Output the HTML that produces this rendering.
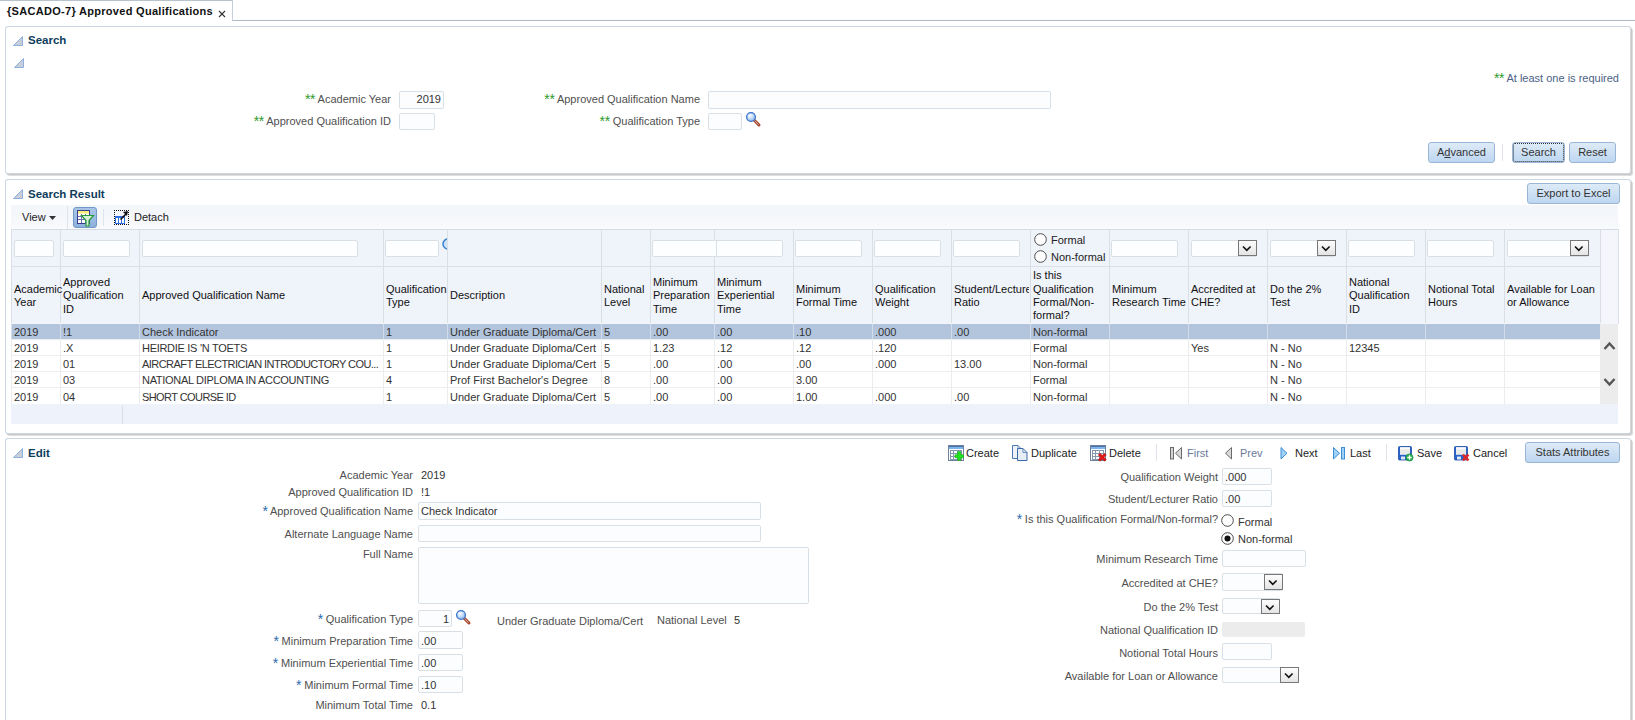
<!DOCTYPE html><html><head><meta charset="utf-8"><style>
html,body{margin:0;padding:0;background:#fff;width:1635px;height:720px;overflow:hidden;position:relative;font-family:"Liberation Sans",sans-serif;}
.t{position:absolute;white-space:nowrap;}
.b{position:absolute;}
.a2{font-size:14px;position:relative;top:1px;letter-spacing:-0.4px;line-height:0;}
</style></head><body>
<div class="b" style="left:0px;top:0px;width:233px;height:21px;box-sizing:border-box;border-top:1px solid #b9c3cd;border-right:1px solid #c5cfd9;background:#fff;"></div>
<div class="b" style="left:233px;top:20px;width:1402px;height:1px;background:#a9bacb;"></div>
<div class="t" style="top:4.69px;font-size:11px;line-height:13px;color:#111;font-weight:bold;letter-spacing:0.3px;left:7px;">{SACADO-7} Approved Qualifications</div>
<svg class="b" style="left:218px;top:10px" width="8" height="8"><line x1="1" y1="1" x2="7" y2="7" stroke="#333" stroke-width="1.1"/><line x1="7" y1="1" x2="1" y2="7" stroke="#333" stroke-width="1.1"/></svg>
<div class="b" style="left:5px;top:26px;width:1626px;height:148px;box-sizing:border-box;border:1px solid #cbd8e4;border-right-color:#d6dbe0;border-bottom-color:#cfd6dd;border-radius:3px;background:#fff;box-shadow:1px 1px 0 #c9c9c9,2px 2px 0 #dedede;"></div>
<svg class="b" style="left:13px;top:36px" width="11" height="11"><defs><linearGradient id="tg1336" x1="0" y1="0" x2="1" y2="1"><stop offset="0" stop-color="#d7dee6"/><stop offset="1" stop-color="#a9b7c6"/></linearGradient></defs><polygon points="0.5,9.5 9.5,0.5 9.5,9.5" fill="#c9cfd8" stroke="#8db0df" stroke-width="1"/></svg>
<div class="t" style="top:33.02px;font-size:11.5px;line-height:14px;color:#0f3d5c;font-weight:bold;left:28px;">Search</div>
<svg class="b" style="left:14px;top:58px" width="11" height="11"><defs><linearGradient id="tg1458" x1="0" y1="0" x2="1" y2="1"><stop offset="0" stop-color="#d7dee6"/><stop offset="1" stop-color="#a9b7c6"/></linearGradient></defs><polygon points="0.5,9.5 9.5,0.5 9.5,9.5" fill="#c9cfd8" stroke="#8db0df" stroke-width="1"/></svg>
<div class="t" style="top:71.69px;font-size:11px;line-height:13px;color:#4c5f86;right:16px;"><span class="a2" style="color:#2d9b2d">**</span> At least one is required</div>
<div class="t" style="top:92.69px;font-size:11px;line-height:13px;color:#4f4f4f;right:1244px;"><span class="a2" style="color:#2d9b2d">**</span> Academic Year</div>
<div class="t" style="top:114.69px;font-size:11px;line-height:13px;color:#4f4f4f;right:1244px;"><span class="a2" style="color:#2d9b2d">**</span> Approved Qualification ID</div>
<div class="t" style="top:92.69px;font-size:11px;line-height:13px;color:#4f4f4f;right:935px;"><span class="a2" style="color:#2d9b2d">**</span> Approved Qualification Name</div>
<div class="t" style="top:114.69px;font-size:11px;line-height:13px;color:#4f4f4f;right:935px;"><span class="a2" style="color:#2d9b2d">**</span> Qualification Type</div>
<div class="b" style="left:399px;top:91px;width:45px;height:18px;box-sizing:border-box;border:1px solid #d8e0e6;border-radius:2px;background:#fbfdfe;"></div>
<div class="t" style="top:92.69px;font-size:11px;line-height:13px;color:#333;right:1194px;">2019</div>
<div class="b" style="left:399px;top:113px;width:36px;height:17px;box-sizing:border-box;border:1px solid #d8e0e6;border-radius:2px;background:#fbfdfe;"></div>
<div class="b" style="left:708px;top:91px;width:343px;height:18px;box-sizing:border-box;border:1px solid #d8e0e6;border-radius:2px;background:#fbfdfe;"></div>
<div class="b" style="left:708px;top:113px;width:34px;height:17px;box-sizing:border-box;border:1px solid #d8e0e6;border-radius:2px;background:#fbfdfe;"></div>
<svg class="b" style="left:745px;top:111px" width="17" height="17" viewBox="0 0 17 17"><defs><radialGradient id="mg745111" cx=".4" cy=".35" r=".7"><stop offset="0" stop-color="#ffffff"/><stop offset=".6" stop-color="#b5d3f5"/><stop offset="1" stop-color="#7fb0ea"/></radialGradient></defs><line x1="9" y1="9" x2="14" y2="14" stroke="#a8442a" stroke-width="3" stroke-linecap="round"/><line x1="9.3" y1="9.3" x2="13.7" y2="13.7" stroke="#c9b6a8" stroke-width="1"/><circle cx="6" cy="6" r="4.4" fill="url(#mg745111)" stroke="#3a74cc" stroke-width="1.3"/></svg>
<div class="b" style="left:1428px;top:142px;width:67px;height:21px;box-sizing:border-box;border:1px solid #9ab6d6;border-radius:3px;background:linear-gradient(#deebf8,#bdd6f0);"></div>
<div class="t" style="top:145.69px;font-size:11px;line-height:13px;color:#333;left:1461.5px;transform:translateX(-50%);">A<u>d</u>vanced</div>
<div class="b" style="left:1502px;top:144px;width:1px;height:17px;background:#dde3e9;"></div>
<div class="b" style="left:1512px;top:142px;width:53px;height:21px;box-sizing:border-box;border:1px solid #9ab6d6;border-radius:3px;background:linear-gradient(#deebf8,#bdd6f0);"></div>
<div class="b" style="left:1513px;top:143px;width:51px;height:19px;box-sizing:border-box;border:1px dotted #333;border-radius:2px;"></div>
<div class="t" style="top:145.69px;font-size:11px;line-height:13px;color:#333;left:1538.5px;transform:translateX(-50%);">Search</div>
<div class="b" style="left:1569px;top:142px;width:47px;height:21px;box-sizing:border-box;border:1px solid #9ab6d6;border-radius:3px;background:linear-gradient(#deebf8,#bdd6f0);"></div>
<div class="t" style="top:145.69px;font-size:11px;line-height:13px;color:#333;left:1592.5px;transform:translateX(-50%);">Reset</div>
<div class="b" style="left:5px;top:179px;width:1626px;height:255px;box-sizing:border-box;border:1px solid #cbd8e4;border-right-color:#d6dbe0;border-bottom-color:#cfd6dd;border-radius:3px;background:#fff;box-shadow:1px 1px 0 #c9c9c9,2px 2px 0 #dedede;"></div>
<svg class="b" style="left:13px;top:189px" width="11" height="11"><defs><linearGradient id="tg13189" x1="0" y1="0" x2="1" y2="1"><stop offset="0" stop-color="#d7dee6"/><stop offset="1" stop-color="#a9b7c6"/></linearGradient></defs><polygon points="0.5,9.5 9.5,0.5 9.5,9.5" fill="#c9cfd8" stroke="#8db0df" stroke-width="1"/></svg>
<div class="t" style="top:187.02px;font-size:11.5px;line-height:14px;color:#0f3d5c;font-weight:bold;left:28px;">Search Result</div>
<div class="b" style="left:1527px;top:183px;width:93px;height:21px;box-sizing:border-box;border:1px solid #9ab6d6;border-radius:3px;background:linear-gradient(#deebf8,#bdd6f0);"></div>
<div class="t" style="top:186.69px;font-size:11px;line-height:13px;color:#333;left:1573.5px;transform:translateX(-50%);">Export to Excel</div>
<div class="b" style="left:11px;top:205px;width:1607px;height:24px;background:linear-gradient(#f3f6fa,#f6f8fb 75%,#fafbfd);"></div>
<div class="t" style="top:210.69px;font-size:11px;line-height:13px;color:#222;left:22px;">View</div>
<svg class="b" style="left:49px;top:216px" width="8" height="5"><polygon points="0,0 7,0 3.5,4" fill="#333"/></svg>
<div class="b" style="left:67px;top:206px;width:1px;height:23px;background:#dfe4ea;"></div>
<div class="b" style="left:73px;top:207px;width:24px;height:21px;box-sizing:border-box;border:1px solid #7197c6;border-radius:3px;background:linear-gradient(#a9c6e8,#8db1dc);"><svg width="24" height="21" style="position:absolute;left:-1px;top:-1px"><rect x="4.5" y="3.5" width="12" height="13" fill="#fff" stroke="#3b3b8c"/><rect x="5" y="4" width="11" height="2.5" fill="#f7ee7a"/><path d="M5 9.5h11M5 12.5h11M8.5 7v9M12.5 7v9" stroke="#6c6cb0" stroke-width="1"/><path d="M8.5 8.5h12l-4.5 5v5.5h-3v-5.5z" fill="#d8f2d8" stroke="#2a9a3a" stroke-width="1.2"/></svg></div>
<div class="b" style="left:103px;top:209px;width:1px;height:17px;background:#dfe4ea;"></div>
<div class="b" style="left:114px;top:210px;width:15px;height:15px;box-sizing:border-box;border:1px dotted #111;"><svg width="15" height="15" style="position:absolute;left:-1px;top:-1px"><rect x="1.5" y="6.5" width="9" height="7" fill="#fff" stroke="#2f6fe0"/><rect x="1" y="6" width="10" height="2" fill="#2f6fe0"/><path d="M4.5 8v6M7.5 8v6" stroke="#2f6fe0"/><path d="M6.5 9.5L12 4" stroke="#111" stroke-width="1.6"/><polygon points="9,2 14,1 13,6" fill="#111"/></svg></div>
<div class="t" style="top:210.69px;font-size:11px;line-height:13px;color:#222;left:134px;">Detach</div>
<div class="b" style="left:11px;top:229px;width:1589px;height:95px;background:#eff3fa;"></div>
<div class="b" style="left:1600px;top:229px;width:18px;height:95px;background:#f4f6fb;"></div>
<div class="b" style="left:11px;top:229px;width:1608px;height:1px;background:#d5dce4;"></div>
<div class="b" style="left:1618px;top:229px;width:1px;height:95px;background:#d9dfe6;"></div>
<div class="b" style="left:11px;top:266px;width:1589px;height:1px;background:#d9e0e7;"></div>
<div class="b" style="left:11px;top:324px;width:1589px;height:16px;background:#b2c5dd;"></div>
<div class="b" style="left:11px;top:323px;width:1589px;height:1px;background:#f3f5f9;"></div>
<div class="b" style="left:11px;top:229px;width:1px;height:94px;background:#d9dfe5;"></div>
<div class="b" style="left:11px;top:324px;width:1px;height:16px;background:#d3dde9;"></div>
<div class="b" style="left:11px;top:340px;width:1px;height:64px;background:#eaecee;"></div>
<div class="b" style="left:60px;top:229px;width:1px;height:94px;background:#d9dfe5;"></div>
<div class="b" style="left:60px;top:324px;width:1px;height:16px;background:#d3dde9;"></div>
<div class="b" style="left:60px;top:340px;width:1px;height:64px;background:#eaecee;"></div>
<div class="b" style="left:139px;top:229px;width:1px;height:94px;background:#d9dfe5;"></div>
<div class="b" style="left:139px;top:324px;width:1px;height:16px;background:#d3dde9;"></div>
<div class="b" style="left:139px;top:340px;width:1px;height:64px;background:#eaecee;"></div>
<div class="b" style="left:383px;top:229px;width:1px;height:94px;background:#d9dfe5;"></div>
<div class="b" style="left:383px;top:324px;width:1px;height:16px;background:#d3dde9;"></div>
<div class="b" style="left:383px;top:340px;width:1px;height:64px;background:#eaecee;"></div>
<div class="b" style="left:447px;top:229px;width:1px;height:94px;background:#d9dfe5;"></div>
<div class="b" style="left:447px;top:324px;width:1px;height:16px;background:#d3dde9;"></div>
<div class="b" style="left:447px;top:340px;width:1px;height:64px;background:#eaecee;"></div>
<div class="b" style="left:601px;top:229px;width:1px;height:94px;background:#d9dfe5;"></div>
<div class="b" style="left:601px;top:324px;width:1px;height:16px;background:#d3dde9;"></div>
<div class="b" style="left:601px;top:340px;width:1px;height:64px;background:#eaecee;"></div>
<div class="b" style="left:650px;top:229px;width:1px;height:94px;background:#d9dfe5;"></div>
<div class="b" style="left:650px;top:324px;width:1px;height:16px;background:#d3dde9;"></div>
<div class="b" style="left:650px;top:340px;width:1px;height:64px;background:#eaecee;"></div>
<div class="b" style="left:714px;top:229px;width:1px;height:94px;background:#d9dfe5;"></div>
<div class="b" style="left:714px;top:324px;width:1px;height:16px;background:#d3dde9;"></div>
<div class="b" style="left:714px;top:340px;width:1px;height:64px;background:#eaecee;"></div>
<div class="b" style="left:793px;top:229px;width:1px;height:94px;background:#d9dfe5;"></div>
<div class="b" style="left:793px;top:324px;width:1px;height:16px;background:#d3dde9;"></div>
<div class="b" style="left:793px;top:340px;width:1px;height:64px;background:#eaecee;"></div>
<div class="b" style="left:872px;top:229px;width:1px;height:94px;background:#d9dfe5;"></div>
<div class="b" style="left:872px;top:324px;width:1px;height:16px;background:#d3dde9;"></div>
<div class="b" style="left:872px;top:340px;width:1px;height:64px;background:#eaecee;"></div>
<div class="b" style="left:951px;top:229px;width:1px;height:94px;background:#d9dfe5;"></div>
<div class="b" style="left:951px;top:324px;width:1px;height:16px;background:#d3dde9;"></div>
<div class="b" style="left:951px;top:340px;width:1px;height:64px;background:#eaecee;"></div>
<div class="b" style="left:1030px;top:229px;width:1px;height:94px;background:#d9dfe5;"></div>
<div class="b" style="left:1030px;top:324px;width:1px;height:16px;background:#d3dde9;"></div>
<div class="b" style="left:1030px;top:340px;width:1px;height:64px;background:#eaecee;"></div>
<div class="b" style="left:1109px;top:229px;width:1px;height:94px;background:#d9dfe5;"></div>
<div class="b" style="left:1109px;top:324px;width:1px;height:16px;background:#d3dde9;"></div>
<div class="b" style="left:1109px;top:340px;width:1px;height:64px;background:#eaecee;"></div>
<div class="b" style="left:1188px;top:229px;width:1px;height:94px;background:#d9dfe5;"></div>
<div class="b" style="left:1188px;top:324px;width:1px;height:16px;background:#d3dde9;"></div>
<div class="b" style="left:1188px;top:340px;width:1px;height:64px;background:#eaecee;"></div>
<div class="b" style="left:1267px;top:229px;width:1px;height:94px;background:#d9dfe5;"></div>
<div class="b" style="left:1267px;top:324px;width:1px;height:16px;background:#d3dde9;"></div>
<div class="b" style="left:1267px;top:340px;width:1px;height:64px;background:#eaecee;"></div>
<div class="b" style="left:1346px;top:229px;width:1px;height:94px;background:#d9dfe5;"></div>
<div class="b" style="left:1346px;top:324px;width:1px;height:16px;background:#d3dde9;"></div>
<div class="b" style="left:1346px;top:340px;width:1px;height:64px;background:#eaecee;"></div>
<div class="b" style="left:1425px;top:229px;width:1px;height:94px;background:#d9dfe5;"></div>
<div class="b" style="left:1425px;top:324px;width:1px;height:16px;background:#d3dde9;"></div>
<div class="b" style="left:1425px;top:340px;width:1px;height:64px;background:#eaecee;"></div>
<div class="b" style="left:1504px;top:229px;width:1px;height:94px;background:#d9dfe5;"></div>
<div class="b" style="left:1504px;top:324px;width:1px;height:16px;background:#d3dde9;"></div>
<div class="b" style="left:1504px;top:340px;width:1px;height:64px;background:#eaecee;"></div>
<div class="b" style="left:1600px;top:229px;width:1px;height:94px;background:#d9dfe5;"></div>
<div class="b" style="left:1600px;top:324px;width:1px;height:16px;background:#d3dde9;"></div>
<div class="b" style="left:1600px;top:340px;width:1px;height:64px;background:#eaecee;"></div>
<div class="b" style="left:11px;top:339px;width:1589px;height:1px;background:#ebedef;"></div>
<div class="b" style="left:11px;top:355px;width:1589px;height:1px;background:#ebedef;"></div>
<div class="b" style="left:11px;top:371px;width:1589px;height:1px;background:#ebedef;"></div>
<div class="b" style="left:11px;top:387px;width:1589px;height:1px;background:#ebedef;"></div>
<div class="b" style="left:14px;top:240px;width:40px;height:17px;box-sizing:border-box;border:1px solid #d8e0e6;border-radius:2px;background:#fdfeff;"></div>
<div class="b" style="left:63px;top:240px;width:67px;height:17px;box-sizing:border-box;border:1px solid #d8e0e6;border-radius:2px;background:#fdfeff;"></div>
<div class="b" style="left:142px;top:240px;width:216px;height:17px;box-sizing:border-box;border:1px solid #d8e0e6;border-radius:2px;background:#fdfeff;"></div>
<div class="b" style="left:385px;top:240px;width:54px;height:17px;box-sizing:border-box;border:1px solid #d8e0e6;border-radius:2px;background:#fdfeff;"></div>
<svg class="b" style="left:441px;top:238px" width="6" height="12"><circle cx="7" cy="6" r="5" fill="#cfe3f7" stroke="#3a7fd0" stroke-width="1.5"/></svg>
<div class="b" style="left:652px;top:240px;width:67px;height:17px;box-sizing:border-box;border:1px solid #d8e0e6;border-radius:2px;background:#fdfeff;"></div>
<div class="b" style="left:716px;top:240px;width:67px;height:17px;box-sizing:border-box;border:1px solid #d8e0e6;border-radius:2px;background:#fdfeff;"></div>
<div class="b" style="left:795px;top:240px;width:67px;height:17px;box-sizing:border-box;border:1px solid #d8e0e6;border-radius:2px;background:#fdfeff;"></div>
<div class="b" style="left:874px;top:240px;width:67px;height:17px;box-sizing:border-box;border:1px solid #d8e0e6;border-radius:2px;background:#fdfeff;"></div>
<div class="b" style="left:953px;top:240px;width:67px;height:17px;box-sizing:border-box;border:1px solid #d8e0e6;border-radius:2px;background:#fdfeff;"></div>
<svg class="b" style="left:1034px;top:233px" width="13" height="13"><circle cx="6.5" cy="6.5" r="5.8" fill="#fff" stroke="#4a4a4a" stroke-width="1"/></svg>
<div class="t" style="top:233.69px;font-size:11px;line-height:13px;color:#222;left:1051px;">Formal</div>
<svg class="b" style="left:1034px;top:250px" width="13" height="13"><circle cx="6.5" cy="6.5" r="5.8" fill="#fff" stroke="#4a4a4a" stroke-width="1"/></svg>
<div class="t" style="top:250.69px;font-size:11px;line-height:13px;color:#222;left:1051px;">Non-formal</div>
<div class="b" style="left:1111px;top:240px;width:67px;height:17px;box-sizing:border-box;border:1px solid #d8e0e6;border-radius:2px;background:#fdfeff;"></div>
<div class="b" style="left:1191px;top:240px;width:66px;height:17px;box-sizing:border-box;border:1px solid #d8e0e6;border-radius:2px;background:#fdfeff;"></div>
<div class="b" style="left:1238px;top:240px;width:19px;height:16px;box-sizing:border-box;border:1px solid #777;background:linear-gradient(#fdfdfd,#e4e4e4);"><svg width="18" height="15" style="position:absolute;left:2px;top:1px"><polyline points="2,4.5 5.8,8.3 9.6,4.5" fill="none" stroke="#111" stroke-width="1.6"/></svg></div>
<div class="b" style="left:1270px;top:240px;width:66px;height:17px;box-sizing:border-box;border:1px solid #d8e0e6;border-radius:2px;background:#fdfeff;"></div>
<div class="b" style="left:1317px;top:240px;width:19px;height:16px;box-sizing:border-box;border:1px solid #777;background:linear-gradient(#fdfdfd,#e4e4e4);"><svg width="18" height="15" style="position:absolute;left:2px;top:1px"><polyline points="2,4.5 5.8,8.3 9.6,4.5" fill="none" stroke="#111" stroke-width="1.6"/></svg></div>
<div class="b" style="left:1348px;top:240px;width:67px;height:17px;box-sizing:border-box;border:1px solid #d8e0e6;border-radius:2px;background:#fdfeff;"></div>
<div class="b" style="left:1427px;top:240px;width:67px;height:17px;box-sizing:border-box;border:1px solid #d8e0e6;border-radius:2px;background:#fdfeff;"></div>
<div class="b" style="left:1507px;top:240px;width:82px;height:17px;box-sizing:border-box;border:1px solid #d8e0e6;border-radius:2px;background:#fdfeff;"></div>
<div class="b" style="left:1570px;top:240px;width:19px;height:16px;box-sizing:border-box;border:1px solid #777;background:linear-gradient(#fdfdfd,#e4e4e4);"><svg width="18" height="15" style="position:absolute;left:2px;top:1px"><polyline points="2,4.5 5.8,8.3 9.6,4.5" fill="none" stroke="#111" stroke-width="1.6"/></svg></div>
<div class="t" style="top:282.69px;font-size:11px;line-height:13px;color:#111;left:14px;">Academic</div>
<div class="t" style="top:295.69px;font-size:11px;line-height:13px;color:#111;left:14px;">Year</div>
<div class="t" style="top:275.69px;font-size:11px;line-height:13px;color:#111;left:63px;">Approved</div>
<div class="t" style="top:288.69px;font-size:11px;line-height:13px;color:#111;left:63px;">Qualification</div>
<div class="t" style="top:302.69px;font-size:11px;line-height:13px;color:#111;left:63px;">ID</div>
<div class="t" style="top:288.69px;font-size:11px;line-height:13px;color:#111;left:142px;">Approved Qualification Name</div>
<div class="t" style="top:282.69px;font-size:11px;line-height:13px;color:#111;left:386px;">Qualification</div>
<div class="t" style="top:295.69px;font-size:11px;line-height:13px;color:#111;left:386px;">Type</div>
<div class="t" style="top:288.69px;font-size:11px;line-height:13px;color:#111;left:450px;">Description</div>
<div class="t" style="top:282.69px;font-size:11px;line-height:13px;color:#111;left:604px;">National</div>
<div class="t" style="top:295.69px;font-size:11px;line-height:13px;color:#111;left:604px;">Level</div>
<div class="t" style="top:275.69px;font-size:11px;line-height:13px;color:#111;left:653px;">Minimum</div>
<div class="t" style="top:288.69px;font-size:11px;line-height:13px;color:#111;left:653px;">Preparation</div>
<div class="t" style="top:302.69px;font-size:11px;line-height:13px;color:#111;left:653px;">Time</div>
<div class="t" style="top:275.69px;font-size:11px;line-height:13px;color:#111;left:717px;">Minimum</div>
<div class="t" style="top:288.69px;font-size:11px;line-height:13px;color:#111;left:717px;">Experiential</div>
<div class="t" style="top:302.69px;font-size:11px;line-height:13px;color:#111;left:717px;">Time</div>
<div class="t" style="top:282.69px;font-size:11px;line-height:13px;color:#111;left:796px;">Minimum</div>
<div class="t" style="top:295.69px;font-size:11px;line-height:13px;color:#111;left:796px;">Formal Time</div>
<div class="t" style="top:282.69px;font-size:11px;line-height:13px;color:#111;left:875px;">Qualification</div>
<div class="t" style="top:295.69px;font-size:11px;line-height:13px;color:#111;left:875px;">Weight</div>
<div class="t" style="top:282.69px;font-size:11px;line-height:13px;color:#111;left:954px;max-width:75px;overflow:hidden;">Student/Lecturer</div>
<div class="t" style="top:295.69px;font-size:11px;line-height:13px;color:#111;left:954px;max-width:75px;overflow:hidden;">Ratio</div>
<div class="t" style="top:268.69px;font-size:11px;line-height:13px;color:#111;left:1033px;">Is this</div>
<div class="t" style="top:282.69px;font-size:11px;line-height:13px;color:#111;left:1033px;">Qualification</div>
<div class="t" style="top:295.69px;font-size:11px;line-height:13px;color:#111;left:1033px;">Formal/Non-</div>
<div class="t" style="top:308.69px;font-size:11px;line-height:13px;color:#111;left:1033px;">formal?</div>
<div class="t" style="top:282.69px;font-size:11px;line-height:13px;color:#111;left:1112px;">Minimum</div>
<div class="t" style="top:295.69px;font-size:11px;line-height:13px;color:#111;left:1112px;">Research Time</div>
<div class="t" style="top:282.69px;font-size:11px;line-height:13px;color:#111;left:1191px;">Accredited at</div>
<div class="t" style="top:295.69px;font-size:11px;line-height:13px;color:#111;left:1191px;">CHE?</div>
<div class="t" style="top:282.69px;font-size:11px;line-height:13px;color:#111;left:1270px;">Do the 2%</div>
<div class="t" style="top:295.69px;font-size:11px;line-height:13px;color:#111;left:1270px;">Test</div>
<div class="t" style="top:275.69px;font-size:11px;line-height:13px;color:#111;left:1349px;">National</div>
<div class="t" style="top:288.69px;font-size:11px;line-height:13px;color:#111;left:1349px;">Qualification</div>
<div class="t" style="top:302.69px;font-size:11px;line-height:13px;color:#111;left:1349px;">ID</div>
<div class="t" style="top:282.69px;font-size:11px;line-height:13px;color:#111;left:1428px;">Notional Total</div>
<div class="t" style="top:295.69px;font-size:11px;line-height:13px;color:#111;left:1428px;">Hours</div>
<div class="t" style="top:282.69px;font-size:11px;line-height:13px;color:#111;left:1507px;">Available for Loan</div>
<div class="t" style="top:295.69px;font-size:11px;line-height:13px;color:#111;left:1507px;">or Allowance</div>
<div class="t" style="top:325.69px;font-size:11px;line-height:13px;color:#333;left:14px;">2019</div>
<div class="t" style="top:325.69px;font-size:11px;line-height:13px;color:#333;left:63px;">!1</div>
<div class="t" style="top:325.69px;font-size:11px;line-height:13px;color:#333;left:142px;">Check Indicator</div>
<div class="t" style="top:325.69px;font-size:11px;line-height:13px;color:#333;left:386px;">1</div>
<div class="t" style="top:325.69px;font-size:11px;line-height:13px;color:#333;left:450px;">Under Graduate Diploma/Cert</div>
<div class="t" style="top:325.69px;font-size:11px;line-height:13px;color:#333;left:604px;">5</div>
<div class="t" style="top:325.69px;font-size:11px;line-height:13px;color:#333;left:653px;">.00</div>
<div class="t" style="top:325.69px;font-size:11px;line-height:13px;color:#333;left:717px;">.00</div>
<div class="t" style="top:325.69px;font-size:11px;line-height:13px;color:#333;left:796px;">.10</div>
<div class="t" style="top:325.69px;font-size:11px;line-height:13px;color:#333;left:875px;">.000</div>
<div class="t" style="top:325.69px;font-size:11px;line-height:13px;color:#333;left:954px;">.00</div>
<div class="t" style="top:325.69px;font-size:11px;line-height:13px;color:#333;left:1033px;">Non-formal</div>
<div class="t" style="top:341.69px;font-size:11px;line-height:13px;color:#333;left:14px;">2019</div>
<div class="t" style="top:341.69px;font-size:11px;line-height:13px;color:#333;left:63px;">.X</div>
<div class="t" style="top:341.69px;font-size:11px;line-height:13px;color:#333;letter-spacing:-0.29px;left:142px;">HEIRDIE IS &#x27;N TOETS</div>
<div class="t" style="top:341.69px;font-size:11px;line-height:13px;color:#333;left:386px;">1</div>
<div class="t" style="top:341.69px;font-size:11px;line-height:13px;color:#333;left:450px;">Under Graduate Diploma/Cert</div>
<div class="t" style="top:341.69px;font-size:11px;line-height:13px;color:#333;left:604px;">5</div>
<div class="t" style="top:341.69px;font-size:11px;line-height:13px;color:#333;left:653px;">1.23</div>
<div class="t" style="top:341.69px;font-size:11px;line-height:13px;color:#333;left:717px;">.12</div>
<div class="t" style="top:341.69px;font-size:11px;line-height:13px;color:#333;left:796px;">.12</div>
<div class="t" style="top:341.69px;font-size:11px;line-height:13px;color:#333;left:875px;">.120</div>
<div class="t" style="top:341.69px;font-size:11px;line-height:13px;color:#333;left:1033px;">Formal</div>
<div class="t" style="top:341.69px;font-size:11px;line-height:13px;color:#333;left:1191px;">Yes</div>
<div class="t" style="top:341.69px;font-size:11px;line-height:13px;color:#333;left:1270px;">N - No</div>
<div class="t" style="top:341.69px;font-size:11px;line-height:13px;color:#333;left:1349px;">12345</div>
<div class="t" style="top:357.69px;font-size:11px;line-height:13px;color:#333;left:14px;">2019</div>
<div class="t" style="top:357.69px;font-size:11px;line-height:13px;color:#333;left:63px;">01</div>
<div class="t" style="top:357.69px;font-size:11px;line-height:13px;color:#333;letter-spacing:-0.55px;left:142px;">AIRCRAFT ELECTRICIAN INTRODUCTORY COU...</div>
<div class="t" style="top:357.69px;font-size:11px;line-height:13px;color:#333;left:386px;">1</div>
<div class="t" style="top:357.69px;font-size:11px;line-height:13px;color:#333;left:450px;">Under Graduate Diploma/Cert</div>
<div class="t" style="top:357.69px;font-size:11px;line-height:13px;color:#333;left:604px;">5</div>
<div class="t" style="top:357.69px;font-size:11px;line-height:13px;color:#333;left:653px;">.00</div>
<div class="t" style="top:357.69px;font-size:11px;line-height:13px;color:#333;left:717px;">.00</div>
<div class="t" style="top:357.69px;font-size:11px;line-height:13px;color:#333;left:796px;">.00</div>
<div class="t" style="top:357.69px;font-size:11px;line-height:13px;color:#333;left:875px;">.000</div>
<div class="t" style="top:357.69px;font-size:11px;line-height:13px;color:#333;left:954px;">13.00</div>
<div class="t" style="top:357.69px;font-size:11px;line-height:13px;color:#333;left:1033px;">Non-formal</div>
<div class="t" style="top:357.69px;font-size:11px;line-height:13px;color:#333;left:1270px;">N - No</div>
<div class="t" style="top:373.69px;font-size:11px;line-height:13px;color:#333;left:14px;">2019</div>
<div class="t" style="top:373.69px;font-size:11px;line-height:13px;color:#333;left:63px;">03</div>
<div class="t" style="top:373.69px;font-size:11px;line-height:13px;color:#333;letter-spacing:-0.31px;left:142px;">NATIONAL DIPLOMA IN ACCOUNTING</div>
<div class="t" style="top:373.69px;font-size:11px;line-height:13px;color:#333;left:386px;">4</div>
<div class="t" style="top:373.69px;font-size:11px;line-height:13px;color:#333;left:450px;">Prof First Bachelor&#x27;s Degree</div>
<div class="t" style="top:373.69px;font-size:11px;line-height:13px;color:#333;left:604px;">8</div>
<div class="t" style="top:373.69px;font-size:11px;line-height:13px;color:#333;left:653px;">.00</div>
<div class="t" style="top:373.69px;font-size:11px;line-height:13px;color:#333;left:717px;">.00</div>
<div class="t" style="top:373.69px;font-size:11px;line-height:13px;color:#333;left:796px;">3.00</div>
<div class="t" style="top:373.69px;font-size:11px;line-height:13px;color:#333;left:1033px;">Formal</div>
<div class="t" style="top:373.69px;font-size:11px;line-height:13px;color:#333;left:1270px;">N - No</div>
<div class="t" style="top:390.69px;font-size:11px;line-height:13px;color:#333;left:14px;">2019</div>
<div class="t" style="top:390.69px;font-size:11px;line-height:13px;color:#333;left:63px;">04</div>
<div class="t" style="top:390.69px;font-size:11px;line-height:13px;color:#333;letter-spacing:-0.58px;left:142px;">SHORT COURSE ID</div>
<div class="t" style="top:390.69px;font-size:11px;line-height:13px;color:#333;left:386px;">1</div>
<div class="t" style="top:390.69px;font-size:11px;line-height:13px;color:#333;left:450px;">Under Graduate Diploma/Cert</div>
<div class="t" style="top:390.69px;font-size:11px;line-height:13px;color:#333;left:604px;">5</div>
<div class="t" style="top:390.69px;font-size:11px;line-height:13px;color:#333;left:653px;">.00</div>
<div class="t" style="top:390.69px;font-size:11px;line-height:13px;color:#333;left:717px;">.00</div>
<div class="t" style="top:390.69px;font-size:11px;line-height:13px;color:#333;left:796px;">1.00</div>
<div class="t" style="top:390.69px;font-size:11px;line-height:13px;color:#333;left:875px;">.000</div>
<div class="t" style="top:390.69px;font-size:11px;line-height:13px;color:#333;left:954px;">.00</div>
<div class="t" style="top:390.69px;font-size:11px;line-height:13px;color:#333;left:1033px;">Non-formal</div>
<div class="t" style="top:390.69px;font-size:11px;line-height:13px;color:#333;left:1270px;">N - No</div>
<div class="b" style="left:1600px;top:324px;width:18px;height:80px;background:#ececec;"></div>
<svg class="b" style="left:1603px;top:340px" width="13" height="11"><polyline points="1.5,9 6.5,3.5 11.5,9" fill="none" stroke="#555" stroke-width="2.4"/></svg>
<svg class="b" style="left:1603px;top:377px" width="13" height="11"><polyline points="1.5,2 6.5,7.5 11.5,2" fill="none" stroke="#555" stroke-width="2.4"/></svg>
<div class="b" style="left:11px;top:404px;width:1607px;height:20px;background:#eef2fa;"></div>
<div class="b" style="left:122px;top:405px;width:1px;height:19px;background:#d9dfe5;"></div>
<div class="b" style="left:5px;top:438px;width:1626px;height:322px;box-sizing:border-box;border:1px solid #cbd8e4;border-right-color:#d6dbe0;border-bottom-color:#cfd6dd;border-radius:3px;background:#fff;box-shadow:1px 1px 0 #c9c9c9,2px 2px 0 #dedede;"></div>
<svg class="b" style="left:13px;top:448px" width="11" height="11"><defs><linearGradient id="tg13448" x1="0" y1="0" x2="1" y2="1"><stop offset="0" stop-color="#d7dee6"/><stop offset="1" stop-color="#a9b7c6"/></linearGradient></defs><polygon points="0.5,9.5 9.5,0.5 9.5,9.5" fill="#c9cfd8" stroke="#8db0df" stroke-width="1"/></svg>
<div class="t" style="top:446.02px;font-size:11.5px;line-height:14px;color:#0f3d5c;font-weight:bold;left:28px;">Edit</div>
<svg class="b" style="left:948px;top:445px" width="17" height="17"><rect x=".5" y=".5" width="15" height="15" fill="#fff" stroke="#6f829c"/><rect x="1" y="1" width="14" height="3" fill="#7db6ea"/><line x1="1" y1="1.5" x2="15" y2="1.5" stroke="#4a70b0"/><rect x="2.5" y="5.5" width="11" height="9" fill="#fff" stroke="#8596ac"/><path d="M5.5 5.5v9M9.5 5.5v9M2.5 8.5h11M2.5 11.5h11" stroke="#8596ac"/><path d="M9.8 6.5h3v3.3h2.7v3h-2.7v2.7h-3v-2.7H7v-3h2.8z" fill="#1ee61e" stroke="#19a819" stroke-width=".6"/></svg>
<div class="t" style="top:446.69px;font-size:11px;line-height:13px;color:#222;left:966px;">Create</div>
<svg class="b" style="left:1012px;top:445px" width="17" height="17"><path d="M.5 .5h5.5l3 3v10h-8.5z" fill="#eef3f8" stroke="#4a78b8"/><path d="M6 .5v3h3" fill="none" stroke="#4a78b8" stroke-width=".7"/><path d="M5.5 3.5h5.5l4 4v8h-9.5z" fill="#e6edf5" stroke="#3a68a8"/><path d="M11 3.5v4h4" fill="none" stroke="#3a68a8" stroke-width=".7"/></svg>
<div class="t" style="top:446.69px;font-size:11px;line-height:13px;color:#222;left:1031px;">Duplicate</div>
<svg class="b" style="left:1090px;top:445px" width="17" height="17"><rect x=".5" y=".5" width="15" height="15" fill="#fff" stroke="#6f829c"/><rect x="1" y="1" width="14" height="3" fill="#7db6ea"/><line x1="1" y1="1.5" x2="15" y2="1.5" stroke="#4a70b0"/><rect x="2.5" y="5.5" width="11" height="9" fill="#fff" stroke="#8596ac"/><path d="M5.5 5.5v9M9.5 5.5v9M2.5 8.5h11M2.5 11.5h11" stroke="#8596ac"/><path d="M8.3 10l1.7-1.7 2.3 2.3 2.3-2.3 1.7 1.7-2.3 2.3 2.3 2.3-1.7 1.7-2.3-2.3-2.3 2.3-1.7-1.7 2.3-2.3z" fill="#e01818" stroke="#b00" stroke-width=".5"/></svg>
<div class="t" style="top:446.69px;font-size:11px;line-height:13px;color:#222;left:1109px;">Delete</div>
<div class="b" style="left:1156px;top:444px;width:1px;height:17px;background:#dfe4ea;"></div>
<svg class="b" style="left:1170px;top:447px" width="13" height="13"><rect x=".5" y=".5" width="3" height="11.5" fill="#d4d4d4" stroke="#6a6a6a" stroke-width="1"/><polygon points="11.5,.5 5.5,6.2 11.5,12" fill="#d9d9d9" stroke="#6a6a6a" stroke-width="1"/></svg>
<div class="t" style="top:446.69px;font-size:11px;line-height:13px;color:#6b7a9c;left:1187px;">First</div>
<svg class="b" style="left:1224px;top:447px" width="9" height="13"><polygon points="7.5,.5 1.5,6.2 7.5,12" fill="#d9d9d9" stroke="#6a6a6a" stroke-width="1"/></svg>
<div class="t" style="top:446.69px;font-size:11px;line-height:13px;color:#6b7a9c;left:1240px;">Prev</div>
<svg class="b" style="left:1280px;top:447px" width="9" height="13"><polygon points="1,.5 7,6.2 1,12" fill="#9fd0f5" stroke="#3c8ed6" stroke-width="1"/></svg>
<div class="t" style="top:446.69px;font-size:11px;line-height:13px;color:#222;left:1295px;">Next</div>
<svg class="b" style="left:1333px;top:447px" width="13" height="13"><polygon points=".5,.5 6.5,6.2 .5,12" fill="#9fd0f5" stroke="#3c8ed6" stroke-width="1"/><rect x="8.5" y=".5" width="3" height="11.5" fill="#9fd0f5" stroke="#3c8ed6" stroke-width="1"/></svg>
<div class="t" style="top:446.69px;font-size:11px;line-height:13px;color:#222;left:1350px;">Last</div>
<div class="b" style="left:1386px;top:444px;width:1px;height:17px;background:#dfe4ea;"></div>
<svg class="b" style="left:1398px;top:446px" width="17" height="17"><rect x=".5" y=".5" width="13" height="13.5" rx="1" fill="#2563c9" stroke="#1d4fa6" stroke-width=".8"/><rect x="2" y="1.3" width="10" height="7.5" fill="#e9e9e9"/><rect x="2" y="1.3" width="10" height="2" fill="#fafafa"/><rect x="3" y="10.5" width="4" height="3" fill="#dfe8f4"/><circle cx="11.5" cy="11.5" r="3.6" fill="#22b04a" stroke="#1a8a3a" stroke-width=".6"/><path d="M11.5 9.3v4.4M9.3 11.5h4.4" stroke="#fff" stroke-width="1.3"/></svg>
<div class="t" style="top:446.69px;font-size:11px;line-height:13px;color:#222;left:1417px;">Save</div>
<svg class="b" style="left:1454px;top:446px" width="17" height="17"><rect x=".5" y=".5" width="13" height="13.5" rx="1" fill="#2563c9" stroke="#1d4fa6" stroke-width=".8"/><rect x="2" y="1.3" width="10" height="7.5" fill="#e9e9e9"/><rect x="2" y="1.3" width="10" height="2" fill="#fafafa"/><rect x="3" y="10.5" width="4" height="3" fill="#dfe8f4"/><path d="M8 9.5l1.7-1.7 2 2 2-2 1.7 1.7-2 2 2 2-1.7 1.7-2-2-2 2-1.7-1.7 2-2z" fill="#e02828"/></svg>
<div class="t" style="top:446.69px;font-size:11px;line-height:13px;color:#222;left:1473px;">Cancel</div>
<div class="b" style="left:1525px;top:442px;width:95px;height:21px;box-sizing:border-box;border:1px solid #9ab6d6;border-radius:3px;background:linear-gradient(#deebf8,#bdd6f0);"></div>
<div class="t" style="top:445.69px;font-size:11px;line-height:13px;color:#333;left:1572.5px;transform:translateX(-50%);">Stats Attributes</div>
<div class="t" style="top:468.69px;font-size:11px;line-height:13px;color:#4f4f4f;right:1222px;">Academic Year</div>
<div class="t" style="top:468.69px;font-size:11px;line-height:13px;color:#333;left:421px;">2019</div>
<div class="t" style="top:485.69px;font-size:11px;line-height:13px;color:#4f4f4f;right:1222px;">Approved Qualification ID</div>
<div class="t" style="top:485.69px;font-size:11px;line-height:13px;color:#333;left:421px;">!1</div>
<div class="t" style="top:504.69px;font-size:11px;line-height:13px;color:#4f4f4f;right:1222px;"><span class="a2" style="color:#2a6bab">*</span> Approved Qualification Name</div>
<div class="b" style="left:418px;top:502px;width:343px;height:18px;box-sizing:border-box;border:1px solid #d8e0e6;border-radius:2px;background:#fbfdfe;"></div>
<div class="t" style="top:504.69px;font-size:11px;line-height:13px;color:#333;left:421px;">Check Indicator</div>
<div class="t" style="top:527.69px;font-size:11px;line-height:13px;color:#4f4f4f;right:1222px;">Alternate Language Name</div>
<div class="b" style="left:418px;top:525px;width:343px;height:17px;box-sizing:border-box;border:1px solid #d8e0e6;border-radius:2px;background:#fbfdfe;"></div>
<div class="t" style="top:547.69px;font-size:11px;line-height:13px;color:#4f4f4f;right:1222px;">Full Name</div>
<div class="b" style="left:418px;top:547px;width:391px;height:57px;box-sizing:border-box;border:1px solid #d8e0e6;border-radius:2px;background:#fbfdfe;"></div>
<div class="t" style="top:612.69px;font-size:11px;line-height:13px;color:#4f4f4f;right:1222px;"><span class="a2" style="color:#2a6bab">*</span> Qualification Type</div>
<div class="b" style="left:418px;top:610px;width:34px;height:17px;box-sizing:border-box;border:1px solid #d8e0e6;border-radius:2px;background:#fbfdfe;"></div>
<div class="t" style="top:612.69px;font-size:11px;line-height:13px;color:#333;right:1186px;">1</div>
<svg class="b" style="left:455px;top:609px" width="17" height="17" viewBox="0 0 17 17"><defs><radialGradient id="mg455609" cx=".4" cy=".35" r=".7"><stop offset="0" stop-color="#ffffff"/><stop offset=".6" stop-color="#b5d3f5"/><stop offset="1" stop-color="#7fb0ea"/></radialGradient></defs><line x1="9" y1="9" x2="14" y2="14" stroke="#a8442a" stroke-width="3" stroke-linecap="round"/><line x1="9.3" y1="9.3" x2="13.7" y2="13.7" stroke="#c9b6a8" stroke-width="1"/><circle cx="6" cy="6" r="4.4" fill="url(#mg455609)" stroke="#3a74cc" stroke-width="1.3"/></svg>
<div class="t" style="top:614.69px;font-size:11px;line-height:13px;color:#4f4f4f;left:497px;">Under Graduate Diploma/Cert</div>
<div class="t" style="top:613.69px;font-size:11px;line-height:13px;color:#4f4f4f;left:657px;">National Level</div>
<div class="t" style="top:613.69px;font-size:11px;line-height:13px;color:#333;left:734px;">5</div>
<div class="t" style="top:634.69px;font-size:11px;line-height:13px;color:#4f4f4f;right:1222px;"><span class="a2" style="color:#2a6bab">*</span> Minimum Preparation Time</div>
<div class="b" style="left:418px;top:631px;width:45px;height:18px;box-sizing:border-box;border:1px solid #d8e0e6;border-radius:2px;background:#fbfdfe;"></div>
<div class="t" style="top:634.69px;font-size:11px;line-height:13px;color:#333;left:421px;">.00</div>
<div class="t" style="top:656.69px;font-size:11px;line-height:13px;color:#4f4f4f;right:1222px;"><span class="a2" style="color:#2a6bab">*</span> Minimum Experiential Time</div>
<div class="b" style="left:418px;top:654px;width:45px;height:17px;box-sizing:border-box;border:1px solid #d8e0e6;border-radius:2px;background:#fbfdfe;"></div>
<div class="t" style="top:656.69px;font-size:11px;line-height:13px;color:#333;left:421px;">.00</div>
<div class="t" style="top:678.69px;font-size:11px;line-height:13px;color:#4f4f4f;right:1222px;"><span class="a2" style="color:#2a6bab">*</span> Minimum Formal Time</div>
<div class="b" style="left:418px;top:676px;width:45px;height:17px;box-sizing:border-box;border:1px solid #d8e0e6;border-radius:2px;background:#fbfdfe;"></div>
<div class="t" style="top:678.69px;font-size:11px;line-height:13px;color:#333;left:421px;">.10</div>
<div class="t" style="top:698.69px;font-size:11px;line-height:13px;color:#4f4f4f;right:1222px;">Minimum Total Time</div>
<div class="t" style="top:698.69px;font-size:11px;line-height:13px;color:#333;left:421px;">0.1</div>
<div class="t" style="top:470.69px;font-size:11px;line-height:13px;color:#4f4f4f;right:417px;">Qualification Weight</div>
<div class="b" style="left:1222px;top:468px;width:50px;height:17px;box-sizing:border-box;border:1px solid #d8e0e6;border-radius:2px;background:#fbfdfe;"></div>
<div class="t" style="top:470.69px;font-size:11px;line-height:13px;color:#333;left:1225px;">.000</div>
<div class="t" style="top:492.69px;font-size:11px;line-height:13px;color:#4f4f4f;right:417px;">Student/Lecturer Ratio</div>
<div class="b" style="left:1222px;top:490px;width:50px;height:17px;box-sizing:border-box;border:1px solid #d8e0e6;border-radius:2px;background:#fbfdfe;"></div>
<div class="t" style="top:492.69px;font-size:11px;line-height:13px;color:#333;left:1225px;">.00</div>
<div class="t" style="top:512.69px;font-size:11px;line-height:13px;color:#4f4f4f;right:417px;"><span class="a2" style="color:#2a6bab">*</span> Is this Qualification Formal/Non-formal?</div>
<svg class="b" style="left:1221px;top:514px" width="13" height="13"><circle cx="6.5" cy="6.5" r="5.8" fill="#fff" stroke="#4a4a4a" stroke-width="1"/></svg>
<div class="t" style="top:515.69px;font-size:11px;line-height:13px;color:#333;left:1238px;">Formal</div>
<svg class="b" style="left:1221px;top:532px" width="13" height="13"><circle cx="6.5" cy="6.5" r="5.8" fill="#fff" stroke="#4a4a4a" stroke-width="1"/><circle cx="6.5" cy="6.5" r="3" fill="#111"/></svg>
<div class="t" style="top:532.69px;font-size:11px;line-height:13px;color:#333;left:1238px;">Non-formal</div>
<div class="t" style="top:552.69px;font-size:11px;line-height:13px;color:#4f4f4f;right:417px;">Minimum Research Time</div>
<div class="b" style="left:1222px;top:550px;width:84px;height:17px;box-sizing:border-box;border:1px solid #d8e0e6;border-radius:2px;background:#fbfdfe;"></div>
<div class="t" style="top:576.69px;font-size:11px;line-height:13px;color:#4f4f4f;right:417px;">Accredited at CHE?</div>
<div class="b" style="left:1222px;top:573px;width:61px;height:18px;box-sizing:border-box;border:1px solid #d8e0e6;border-radius:2px;background:#fbfdfe;"></div>
<div class="b" style="left:1264px;top:574px;width:19px;height:16px;box-sizing:border-box;border:1px solid #777;background:linear-gradient(#fdfdfd,#e4e4e4);"><svg width="18" height="15" style="position:absolute;left:2px;top:1px"><polyline points="2,4.5 5.8,8.3 9.6,4.5" fill="none" stroke="#111" stroke-width="1.6"/></svg></div>
<div class="t" style="top:600.69px;font-size:11px;line-height:13px;color:#4f4f4f;right:417px;">Do the 2% Test</div>
<div class="b" style="left:1222px;top:598px;width:58px;height:16px;box-sizing:border-box;border:1px solid #d8e0e6;border-radius:2px;background:#fbfdfe;"></div>
<div class="b" style="left:1261px;top:599px;width:19px;height:15px;box-sizing:border-box;border:1px solid #777;background:linear-gradient(#fdfdfd,#e4e4e4);"><svg width="18" height="15" style="position:absolute;left:2px;top:1px"><polyline points="2,4.5 5.8,8.3 9.6,4.5" fill="none" stroke="#111" stroke-width="1.6"/></svg></div>
<div class="t" style="top:623.69px;font-size:11px;line-height:13px;color:#4f4f4f;right:417px;">National Qualification ID</div>
<div class="b" style="left:1222px;top:622px;width:83px;height:15px;background:#ececec;border-radius:2px;"></div>
<div class="t" style="top:646.69px;font-size:11px;line-height:13px;color:#4f4f4f;right:417px;">Notional Total Hours</div>
<div class="b" style="left:1222px;top:643px;width:50px;height:17px;box-sizing:border-box;border:1px solid #d8e0e6;border-radius:2px;background:#fbfdfe;"></div>
<div class="t" style="top:669.69px;font-size:11px;line-height:13px;color:#4f4f4f;right:417px;">Available for Loan or Allowance</div>
<div class="b" style="left:1222px;top:667px;width:77px;height:16px;box-sizing:border-box;border:1px solid #d8e0e6;border-radius:2px;background:#fbfdfe;"></div>
<div class="b" style="left:1280px;top:667px;width:19px;height:16px;box-sizing:border-box;border:1px solid #777;background:linear-gradient(#fdfdfd,#e4e4e4);"><svg width="18" height="15" style="position:absolute;left:2px;top:1px"><polyline points="2,4.5 5.8,8.3 9.6,4.5" fill="none" stroke="#111" stroke-width="1.6"/></svg></div>
</body></html>
